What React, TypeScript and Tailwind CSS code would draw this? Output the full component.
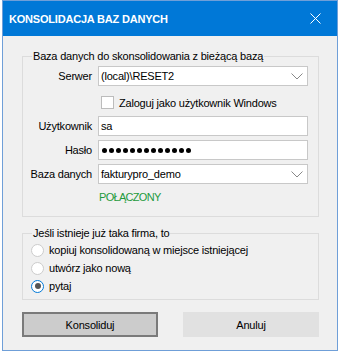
import React from 'react';

function Chevron() {
  return (
    <svg width="12" height="7" viewBox="0 0 12 7" className="shrink-0">
      <polyline points="0.5,0.5 6,6 11.5,0.5" fill="none" stroke="#888888" strokeWidth="1" />
    </svg>
  );
}

function Row({ label, children }: { label: string; children: React.ReactNode }) {
  return (
    <div className="flex items-center">
      <span className="w-[69px] text-right">{label}</span>
      <div className="ml-[6px]">{children}</div>
    </div>
  );
}

function SelectBox({ value }: { value: string }) {
  return (
    <div className="w-[210px] h-[20px] border border-[#c8c8c8] bg-white flex items-center justify-between pl-[2px] pr-[4px]">
      <span>{value}</span>
      <Chevron />
    </div>
  );
}

function Radio({ label, checked }: { label: string; checked?: boolean }) {
  return (
    <div className="h-[18px] flex items-center pl-[8px]">
      {checked ? (
        <span className="w-[13px] h-[13px] rounded-full border-[1.5px] border-[#0078d7] bg-white flex items-center justify-center">
          <span className="w-[6px] h-[6px] rounded-full bg-[#555555]" />
        </span>
      ) : (
        <span className="w-[13px] h-[13px] rounded-full border border-[#cccccc] bg-white" />
      )}
      <span className="ml-[5px]">{label}</span>
    </div>
  );
}

export default function App() {
  return (
    <div className="w-[343px] h-[355px] bg-white text-black text-[11px] leading-[14px] tracking-[-0.2px] font-['Liberation_Sans',Arial,sans-serif]">
      <div className="ml-[2px] w-[336px] h-[351px] border border-[#6f9fd8] bg-[#f0f0f0] flex flex-col">
        {/* title bar */}
        <div className="h-[35px] bg-[#0078d7] flex items-center justify-between">
          <span className="pl-[6px] text-white font-bold">KONSOLIDACJA BAZ DANYCH</span>
          <div className="w-[44px] h-full flex items-center justify-center">
            <svg width="11" height="11" viewBox="0 0 11 11">
              <path d="M0.5 0.5 L10.5 10.5 M10.5 0.5 L0.5 10.5" stroke="#ffffff" strokeWidth="1" />
            </svg>
          </div>
        </div>

        <div className="pl-[19px] pr-[18px]">
          <fieldset className="mt-[13px] border border-[#dcdcdc] pb-[12px]">
            <legend className="ml-[9px] px-[1px] leading-[14px]">Baza danych do skonsolidowania z bieżącą bazą</legend>
            <div className="mt-[3px]">
              <Row label="Serwer">
                <SelectBox value="(local)\RESET2" />
              </Row>
            </div>
            <div className="mt-[10px] h-[13px] flex items-center pl-[78px]">
              <span className="w-[13px] h-[13px] border border-[#bcbcbc] bg-white" />
              <span className="ml-[5px]">Zaloguj jako użytkownik Windows</span>
            </div>
            <div className="mt-[7px]">
              <Row label="Użytkownik">
                <div className="w-[210px] h-[20px] border border-[#c8c8c8] bg-white flex items-center pl-[2px]">sa</div>
              </Row>
            </div>
            <div className="mt-[4px]">
              <Row label="Hasło">
                <div className="w-[210px] h-[20px] border border-[#c8c8c8] bg-white flex items-center gap-[2px] pl-[3px]">
                  {Array.from({ length: 13 }).map((_, i) => (
                    <span key={i} className="w-[5px] h-[5px] rounded-full bg-black" />
                  ))}
                </div>
              </Row>
            </div>
            <div className="mt-[4px]">
              <Row label="Baza danych">
                <SelectBox value="fakturypro_demo" />
              </Row>
            </div>
            <div className="mt-[6px] pl-[76px] text-[#1e9a3c] tracking-[-0.7px]">POŁĄCZONY</div>
          </fieldset>

          <fieldset className="mt-[9px] border border-[#dcdcdc] pt-[1px] pb-[4px]">
            <legend className="ml-[9px] px-[1px] leading-[14px]">Jeśli istnieje już taka firma, to</legend>
            <Radio label="kopiuj konsolidowaną w miejsce istniejącej" />
            <Radio label="utwórz jako nową" />
            <Radio label="pytaj" checked />
          </fieldset>

          <div className="mt-[12px] flex justify-between">
            <button className="w-[136px] h-[25px] border-2 border-[#7a7a7a] bg-[#cccccc]">Konsoliduj</button>
            <button className="w-[136px] h-[25px] bg-[#e1e1e1]">Anuluj</button>
          </div>
        </div>
      </div>
    </div>
  );
}
